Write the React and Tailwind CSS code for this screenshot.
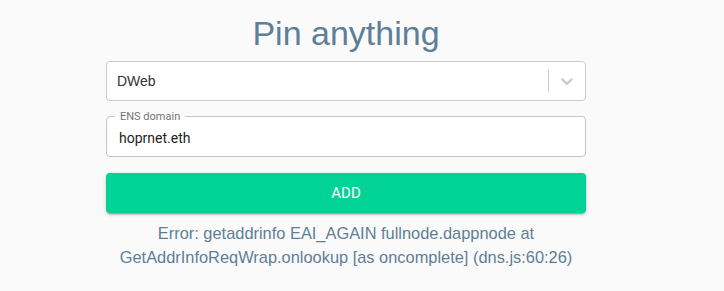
import React from "react";

const sans = { fontFamily: '"Liberation Sans", Arial, sans-serif' };

export default function App() {
  return (
    <div className="min-h-screen bg-[#fafafa]" style={sans}>
      <div className="ml-[106px] w-[480px] pt-[14px]">
        {/* Title */}
        <h1 className="text-center text-[34px] leading-[39px] text-[#5f7e97] font-['Liberation_Sans',Arial,sans-serif]">
          Pin anything
        </h1>

        {/* Select */}
        <div className="mt-[8px] flex h-[40px] items-center rounded-[4px] border border-[#cccccc] bg-white">
          <div className="flex-1 pl-[10px] text-[14px] text-[#333333]">DWeb</div>
          <span className="h-[22px] w-px bg-[#cccccc]" />
          <div className="px-[8px] text-[#cccccc]">
            <svg width="20" height="20" viewBox="0 0 20 20" fill="currentColor">
              <path d="M4.516 7.548c0.436-0.446 1.043-0.481 1.576 0l3.908 3.747 3.908-3.747c0.533-0.481 1.141-0.446 1.574 0 0.436 0.445 0.408 1.197 0 1.615-0.406 0.418-4.695 4.502-4.695 4.502-0.217 0.223-0.502 0.335-0.787 0.335s-0.57-0.112-0.789-0.335c0 0-4.287-4.084-4.695-4.502s-0.436-1.17 0-1.615z" />
            </svg>
          </div>
        </div>

        {/* ENS domain field */}
        <fieldset className="mt-[10px] rounded-[4px] border border-[#c4c4c4] bg-white px-[8px] font-['Roboto',sans-serif]">
          <legend className="px-[5px] text-[11px] leading-[11px] text-[#757575]">ENS domain</legend>
          <input
            className="block h-[34px] w-full pb-[3px] pl-[4px] text-[14px] text-[#222222] outline-none"
            defaultValue="hoprnet.eth"
          />
        </fieldset>

        {/* Add button */}
        <button className="mt-4 flex h-10 w-full items-center justify-center rounded-[4px] bg-[#00d395] font-['Roboto',sans-serif] text-[15px] uppercase text-white shadow-[0_3px_1px_-2px_rgba(0,0,0,0.2),0_2px_2px_0_rgba(0,0,0,0.14),0_1px_5px_0_rgba(0,0,0,0.12)]">
          Add
        </button>

        {/* Error */}
        <p className="mt-2 text-center text-[16.4px] leading-6 text-[#5f7e97]">
          Error: getaddrinfo EAI_AGAIN fullnode.dappnode at GetAddrInfoReqWrap.onlookup [as oncomplete] (dns.js:60:26)
        </p>
      </div>
    </div>
  );
}
